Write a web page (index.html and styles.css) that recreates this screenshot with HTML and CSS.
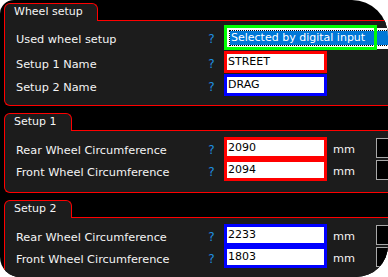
FILE: index.html
```html
<!DOCTYPE html>
<html>
<head>
<meta charset="utf-8">
<link rel="stylesheet" href="styles.css">
</head>
<body>
<div class="window">
  <section class="panel">
    <div class="tab">Wheel setup</div>
    <div class="body body-main">
      <div class="row row-combo">
        <span class="label">Used wheel setup</span><span class="help">?</span>
        <div class="frame frame-green">
          <div class="combo"><span class="sel">Selected by digital input</span></div>
        </div>
      </div>
      <div class="row row-gap">
        <span class="label">Setup 1 Name</span><span class="help">?</span>
        <div class="frame frame-red"><span class="val">STREET</span></div>
      </div>
      <div class="row row-gap">
        <span class="label">Setup 2 Name</span><span class="help">?</span>
        <div class="frame frame-blue"><span class="val">DRAG</span></div>
      </div>
    </div>
  </section>

  <section class="panel">
    <div class="tab">Setup 1</div>
    <div class="body body-setup">
      <div class="row">
        <span class="label">Rear Wheel Circumference</span><span class="help">?</span>
        <div class="frame frame-red"><span class="val">2090</span></div>
        <span class="unit">mm</span><span class="unitbox"></span>
      </div>
      <div class="row">
        <span class="label">Front Wheel Circumference</span><span class="help">?</span>
        <div class="frame frame-red"><span class="val">2094</span></div>
        <span class="unit">mm</span><span class="unitbox"></span>
      </div>
    </div>
  </section>

  <section class="panel">
    <div class="tab">Setup 2</div>
    <div class="body body-setup">
      <div class="row">
        <span class="label">Rear Wheel Circumference</span><span class="help">?</span>
        <div class="frame frame-blue"><span class="val">2233</span></div>
        <span class="unit">mm</span><span class="unitbox"></span>
      </div>
      <div class="row">
        <span class="label">Front Wheel Circumference</span><span class="help">?</span>
        <div class="frame frame-blue"><span class="val">1803</span></div>
        <span class="unit">mm</span><span class="unitbox"></span>
      </div>
    </div>
  </section>
</div>
</body>
</html>
```

FILE: styles.css
```css
* { box-sizing: border-box; }

html, body {
  margin: 0;
  padding: 0;
  background: #fff;
}

body {
  font-family: "DejaVu Sans", Verdana, sans-serif;
  font-size: 11px;
}

.window {
  width: 388px;
  height: 277px;
  background: #000;
  border-radius: 14px 36px 32px 20px;
  overflow: hidden;
  padding: 3px 0 0 4px;
  display: flex;
  flex-direction: column;
  gap: 7px;
}

.panel {
  display: flex;
  flex-direction: column;
  align-items: flex-start;
}

.tab {
  position: relative;
  z-index: 1;
  height: 18px;
  margin-bottom: -1px;
  padding: 0 14px 0 9px;
  border: 1px solid #ff0000;
  border-bottom: none;
  border-radius: 6px 6px 0 0;
  background: #1c1c1c;
  color: #f4f4f4;
  line-height: 16px;
  white-space: nowrap;
}

.body {
  align-self: stretch;
  background: #1c1c1c;
  border: 1px solid #ff0000;
  border-right: none;
  border-radius: 0 0 0 6px;
  padding-left: 11px;
  display: flex;
  flex-direction: column;
}

.body-main {
  padding-top: 4px;
  padding-bottom: 9px;
}

.body-setup {
  padding-top: 6px;
  padding-bottom: 11px;
}

.row {
  display: flex;
  align-items: center;
  height: 22px;
  color: #f4f4f4;
}

.row > * { flex: none; }

.row-combo { height: 25px; }
.row-gap { margin-top: 1px; }

.label {
  width: 186px;
  padding-top: 4px;
  font-size: 11.3px;
  line-height: 13px;
  white-space: nowrap;
}

.help {
  width: 19px;
  padding-top: 4px;
  font-size: 12px;
  line-height: 13px;
  text-align: center;
  color: #1f8fe2;
}

.frame {
  margin-left: 3px;
  width: 103px;
  height: 22px;
  border: 3px solid;
  background: #fff;
  color: #000;
  line-height: 16px;
  padding-left: 1px;
  white-space: nowrap;
}

.frame-red { border-color: #ff0000; }
.frame-blue { border-color: #0000ff; }

.frame-green {
  position: relative;
  width: 153px;
  height: 25px;
  border: none;
  padding: 3px 0 0 3px;
  background: transparent;
}

.frame-green::after {
  content: "";
  position: absolute;
  inset: 0;
  border: 3px solid #00ff00;
}

.combo {
  width: 170px;
  height: 21px;
  background: #fff;
  padding: 2px 0 3px 2px;
}

.sel {
  display: block;
  height: 16px;
  background: #0078d7;
  background-clip: padding-box;
  border: 1px dotted #000;
  color: #fff;
  line-height: 14px;
  padding-left: 1px;
  white-space: nowrap;
}

.unit {
  margin-left: 6px;
  width: 43px;
  padding-top: 2px;
  font-size: 11.3px;
  line-height: 13px;
}

.unitbox {
  width: 22px;
  height: 20px;
  border: 1px solid #a8a8a8;
  background: #000;
}
```
